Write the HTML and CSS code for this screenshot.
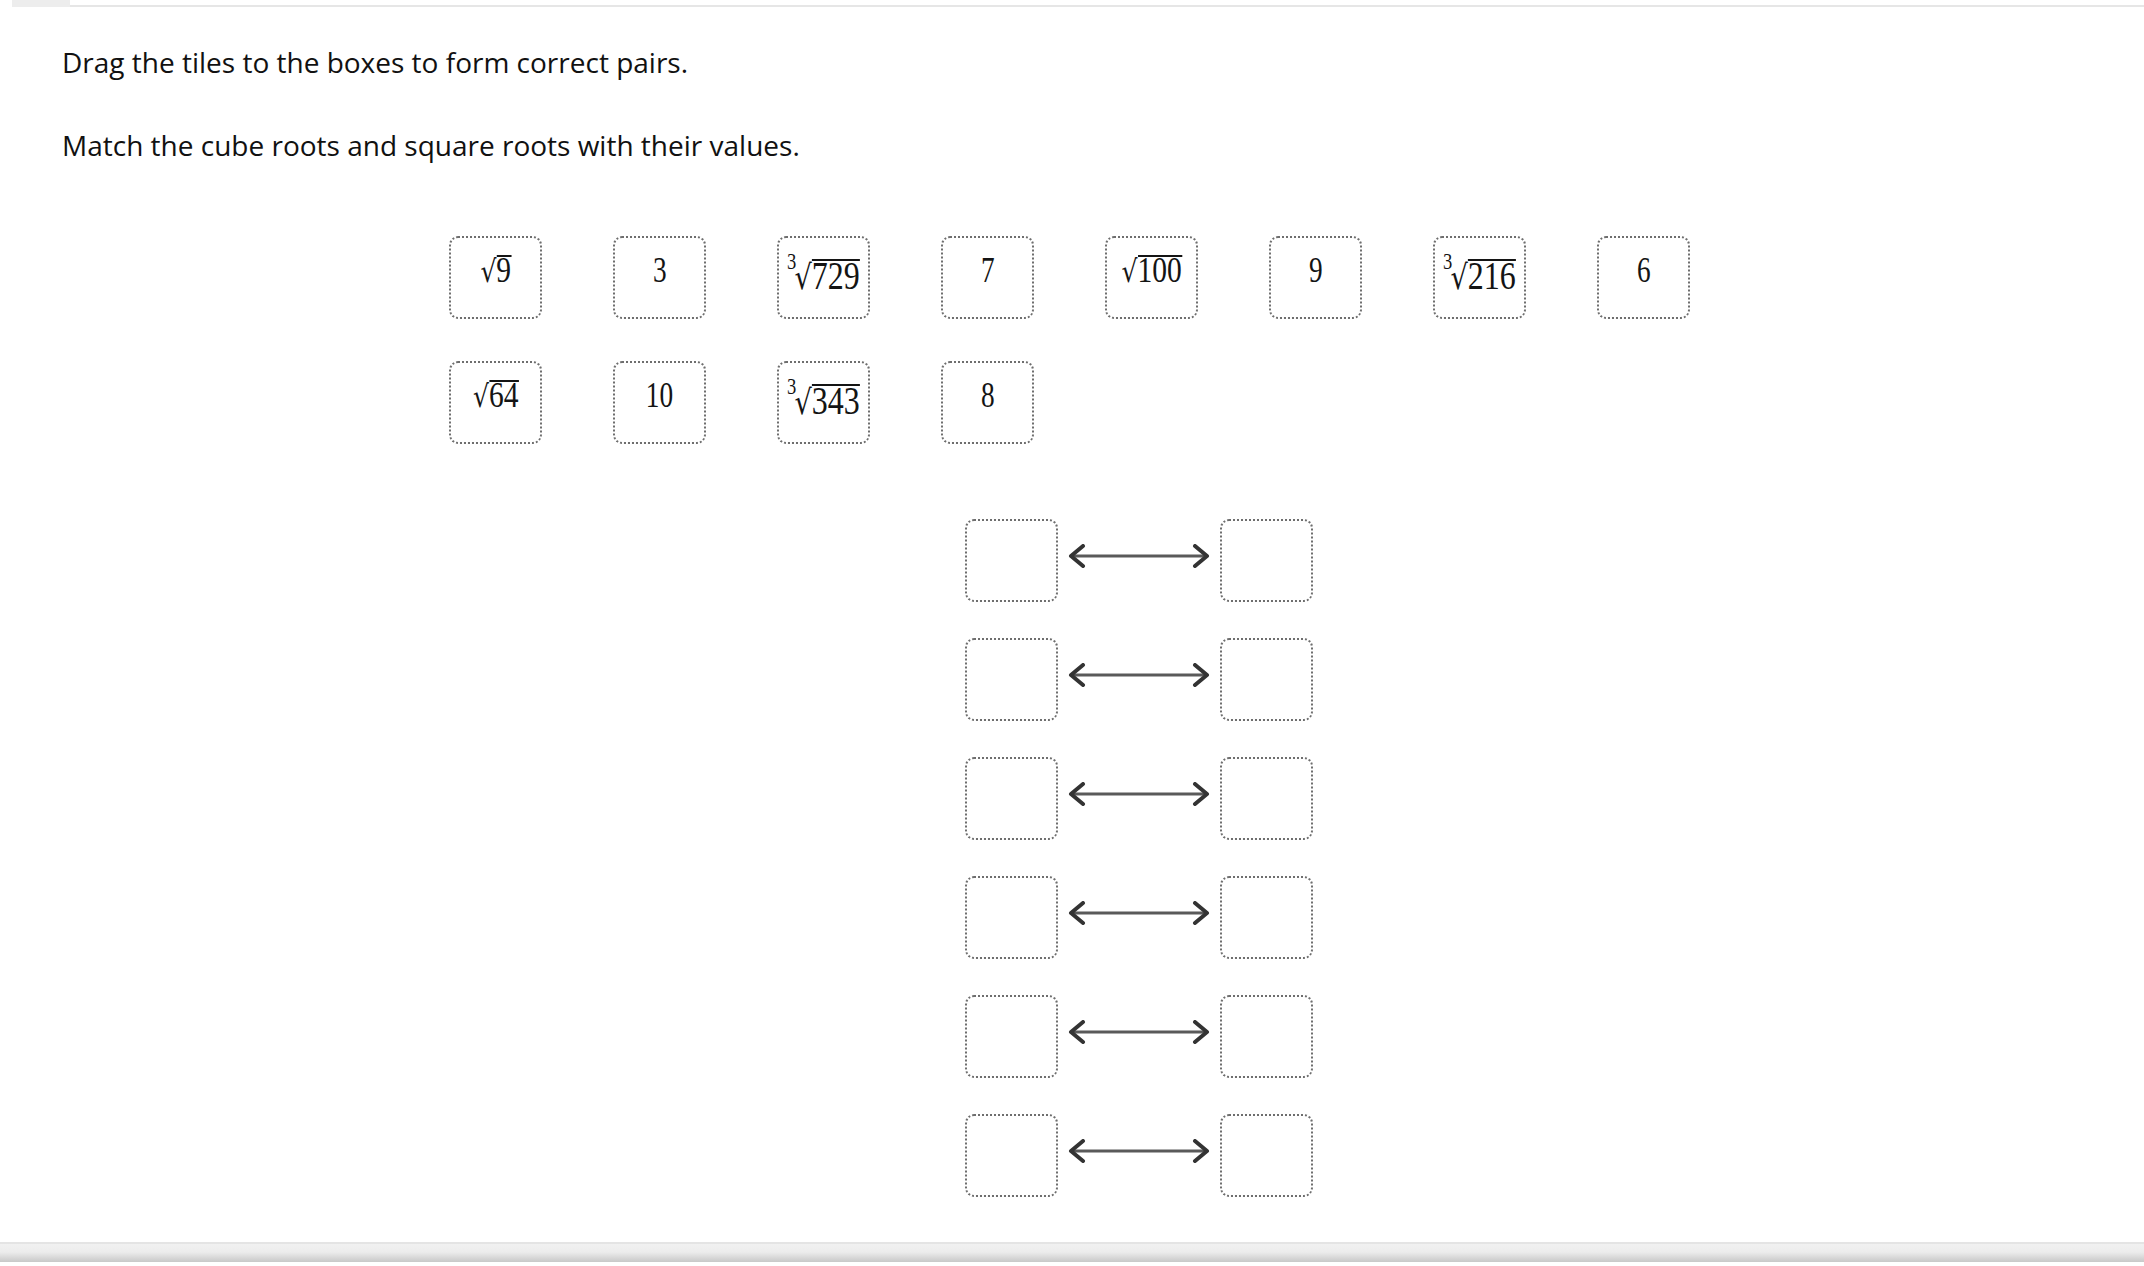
FILE: index.html
```html
<!DOCTYPE html>
<html lang="en">
<head>
<meta charset="utf-8">
<title>Match roots</title>
<link rel="stylesheet" href="styles.css">
</head>
<body>
<div class="page">
  <div class="topbar"><div class="tab"></div><div class="rule"></div></div>
  <main class="content">
    <p class="prompt first">Drag the tiles to the boxes to form correct pairs.</p>
    <p class="prompt">Match the cube roots and square roots with their values.</p>

    <div class="tiles">
      <div class="tile"><span class="expr sq"><span class="sym">√</span><span class="rc">9</span></span></div>
      <div class="tile"><span class="val">3</span></div>
      <div class="tile"><span class="expr cube"><span class="idx">3</span><span class="sym">√</span><span class="rc">729</span></span></div>
      <div class="tile"><span class="val">7</span></div>
      <div class="tile"><span class="expr sq"><span class="sym">√</span><span class="rc">100</span></span></div>
      <div class="tile"><span class="val">9</span></div>
      <div class="tile"><span class="expr cube"><span class="idx">3</span><span class="sym">√</span><span class="rc">216</span></span></div>
      <div class="tile"><span class="val">6</span></div>
      <div class="tile"><span class="expr sq"><span class="sym">√</span><span class="rc">64</span></span></div>
      <div class="tile"><span class="val">10</span></div>
      <div class="tile"><span class="expr cube"><span class="idx">3</span><span class="sym">√</span><span class="rc">343</span></span></div>
      <div class="tile"><span class="val">8</span></div>
    </div>

    <div class="pairs">
      <div class="pair">
        <div class="drop"></div>
        <svg class="arrow" viewBox="0 0 142 24" width="142" height="24"><line x1="3" y1="12" x2="139" y2="12" class="shaft"/><polyline points="15,2 3,12 15,22" class="head"/><polyline points="127,2 139,12 127,22" class="head"/></svg>
        <div class="drop"></div>
      </div>
      <div class="pair">
        <div class="drop"></div>
        <svg class="arrow" viewBox="0 0 142 24" width="142" height="24"><line x1="3" y1="12" x2="139" y2="12" class="shaft"/><polyline points="15,2 3,12 15,22" class="head"/><polyline points="127,2 139,12 127,22" class="head"/></svg>
        <div class="drop"></div>
      </div>
      <div class="pair">
        <div class="drop"></div>
        <svg class="arrow" viewBox="0 0 142 24" width="142" height="24"><line x1="3" y1="12" x2="139" y2="12" class="shaft"/><polyline points="15,2 3,12 15,22" class="head"/><polyline points="127,2 139,12 127,22" class="head"/></svg>
        <div class="drop"></div>
      </div>
      <div class="pair">
        <div class="drop"></div>
        <svg class="arrow" viewBox="0 0 142 24" width="142" height="24"><line x1="3" y1="12" x2="139" y2="12" class="shaft"/><polyline points="15,2 3,12 15,22" class="head"/><polyline points="127,2 139,12 127,22" class="head"/></svg>
        <div class="drop"></div>
      </div>
      <div class="pair">
        <div class="drop"></div>
        <svg class="arrow" viewBox="0 0 142 24" width="142" height="24"><line x1="3" y1="12" x2="139" y2="12" class="shaft"/><polyline points="15,2 3,12 15,22" class="head"/><polyline points="127,2 139,12 127,22" class="head"/></svg>
        <div class="drop"></div>
      </div>
      <div class="pair">
        <div class="drop"></div>
        <svg class="arrow" viewBox="0 0 142 24" width="142" height="24"><line x1="3" y1="12" x2="139" y2="12" class="shaft"/><polyline points="15,2 3,12 15,22" class="head"/><polyline points="127,2 139,12 127,22" class="head"/></svg>
        <div class="drop"></div>
      </div>
    </div>
  </main>
  <div class="footer"></div>
</div>
</body>
</html>
```

FILE: styles.css
```css
html, body {
  margin: 0;
  padding: 0;
  background: #ffffff;
}

.page {
  min-height: 100vh;
  display: flex;
  flex-direction: column;
}

.topbar {
  height: 7px;
  display: flex;
}

.tab {
  margin-left: 12px;
  width: 58px;
  background: #ededed;
}

.rule {
  flex: 1;
  align-self: flex-end;
  height: 2px;
  background: #e6e6e6;
}

.content {
  display: flex;
  flex-direction: column;
}

.prompt {
  margin: 43px 0 0 62px;
  font-family: "Open Sans", "Liberation Sans", sans-serif;
  font-size: 28px;
  line-height: 40px;
  color: #111111;
}

.prompt.first {
  margin-top: 35px;
}

.tiles {
  margin: 71px 0 0 449px;
  display: grid;
  grid-template-columns: repeat(8, 93px);
  grid-auto-rows: 83px;
  column-gap: 71px;
  row-gap: 42px;
}

.tile,
.drop {
  box-sizing: border-box;
  width: 93px;
  height: 83px;
  border: 2px dotted #6e6e6e;
  border-radius: 9px;
  background: #ffffff;
}

.tile {
  display: flex;
  justify-content: center;
  align-items: flex-start;
  font-family: "Liberation Serif", "DejaVu Serif", serif;
  color: #141414;
}

.val {
  display: inline-block;
  font-size: 35px;
  line-height: 35px;
  padding-top: 15px;
  transform: scaleX(0.78);
}

.expr {
  display: inline-block;
  white-space: nowrap;
}

.expr.sq {
  font-size: 36px;
  line-height: 36px;
  padding-top: 14px;
  transform: scaleX(0.82);
}

.expr.cube {
  font-size: 40px;
  line-height: 40px;
  padding-top: 18px;
  transform: scaleX(0.8);
}

.sym {
  font-family: "DejaVu Serif", serif;
  font-size: 0.85em;
}

.rc {
  display: inline-block;
  border-top: 2px solid #141414;
  line-height: 0.75em;
}

.idx {
  font-size: 0.58em;
  line-height: 0;
  vertical-align: 0.85em;
  margin-right: -0.1em;
}

.pairs {
  margin: 75px 0 0 965px;
  display: flex;
  flex-direction: column;
  gap: 36px;
}

.pair {
  display: flex;
  align-items: center;
}

.arrow {
  display: block;
  margin: 0 10px 10px 10px;
}

.shaft {
  stroke: #5a5a5a;
  stroke-width: 3;
}

.head {
  fill: none;
  stroke: #333333;
  stroke-width: 4;
  stroke-linecap: round;
  stroke-linejoin: round;
}

.footer {
  margin-top: auto;
  margin-bottom: 4px;
  height: 20px;
  box-sizing: border-box;
  border-top: 2px solid #e4e4e4;
  background: linear-gradient(#f1f1f1, #ececec 45%, #c8c8c8);
}
```
